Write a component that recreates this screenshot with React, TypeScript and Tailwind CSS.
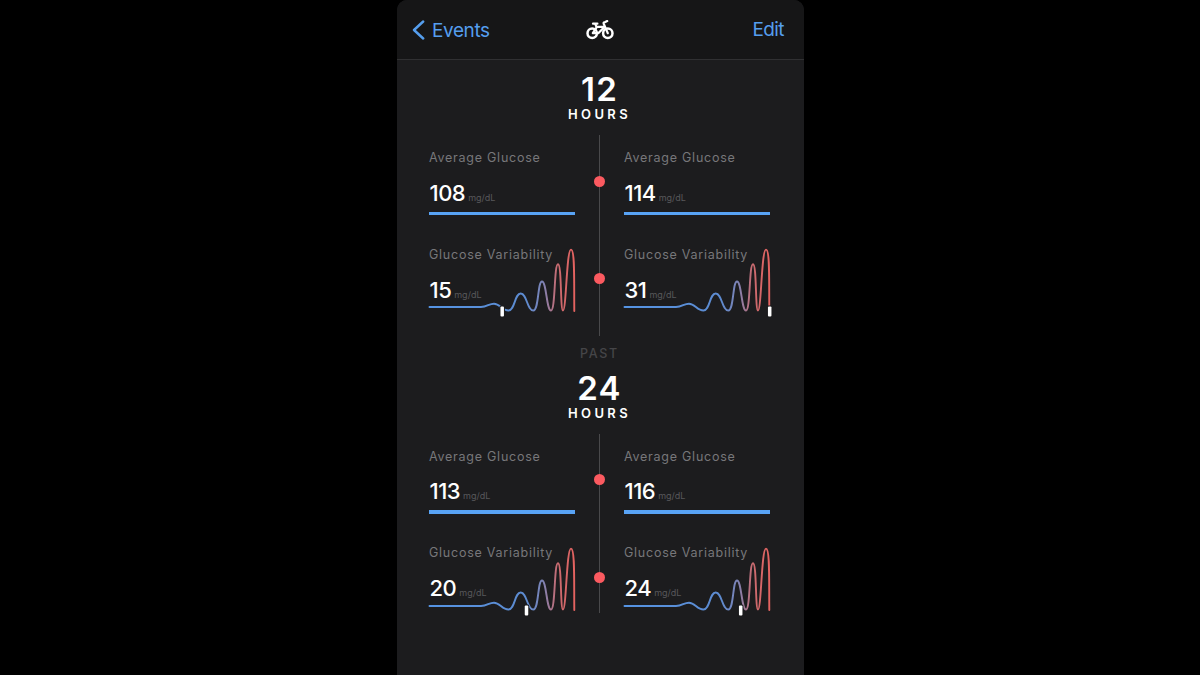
type Reading = {
  average: number;
  variability: number;
  marker: number;
};

type PeriodProps = {
  hours: number;
  before: Reading;
  after: Reading;
  last?: boolean;
};

const WAVE =
  "M.5 62H52C58 62 60 58.7 65 58.7C71 58.7 73 65.5 79.5 65.5C86 65.5 85.5 48.5 91.7 48.5C98 48.5 98 65.5 104.3 65.5C110 65.5 108.5 36.5 113 36.5C117.5 36.5 117.5 65.5 122 65.5C126.5 65.5 125 19.2 129 19.2C132.8 19.2 131.2 65.5 134 65.5C137.3 65.5 137.5 4.6 142 4.6C146 4.6 145 36 145.3 66";

function BikeIcon() {
  return (
    <svg className="-translate-x-px" width="28" height="20" viewBox="0 0 28 20" fill="none" stroke="white" strokeWidth="2.2" strokeLinecap="round" strokeLinejoin="round">
      <circle cx="6.2" cy="13.2" r="4.7" strokeWidth="2.5" />
      <circle cx="21.8" cy="13.2" r="4.7" strokeWidth="2.5" />
      <path d="M7 3.7h4.4" />
      <path d="M9.4 4.2L10.6 7.4L6.8 13.2H12.3L18.6 6.9H10.4" />
      <path d="M21.8 13.2L17.8 4C17.2 2.4 18 2.1 19.2 2.1l2-1" />
    </svg>
  );
}

function Value({ value }: { value: number }) {
  return (
    <div className="flex h-6 items-baseline gap-[3px] pl-[0.5px] leading-6">
      <span className="text-[22px] font-medium tracking-[-0.5px] text-white">{value}</span>
      <span className="text-[9px] tracking-[0] text-[#58585b]">mg/dL</span>
    </div>
  );
}

function Label({ text }: { text: string }) {
  return <div className="h-[17px] whitespace-nowrap text-[12.5px] leading-[17px] tracking-[0.75px] text-[#77777a]">{text}</div>;
}

function Stats({ id, reading }: { id: string; reading: Reading }) {
  return (
    <div className="w-[146px] pt-3.5">
      <Label text="Average Glucose" />
      <div className="mt-[14.5px]">
        <Value value={reading.average} />
      </div>
      <div className="mt-[7px] h-[3.5px] bg-[#58a3f5]" />
      <div className="relative mt-[30.5px]">
        <Label text="Glucose Variability" />
        <div className="mt-[15px]">
          <Value value={reading.variability} />
        </div>
        {/* The wave climbs past the label, so it is laid over the text */}
        <svg className="absolute left-0 -top-[0.5px] overflow-visible" width="146" height="74" viewBox="0 0 146 74" fill="none">
          <defs>
            <linearGradient id={id} gradientUnits="userSpaceOnUse" x1="0" y1="0" x2="146" y2="0">
              <stop offset="0" stopColor="#5594e4" />
              <stop offset="0.66" stopColor="#5d8bd0" />
              <stop offset="0.78" stopColor="#7d83b5" />
              <stop offset="0.88" stopColor="#c96b70" />
              <stop offset="1" stopColor="#e5625f" />
            </linearGradient>
          </defs>
          <path d={WAVE} stroke={`url(#${id})`} strokeWidth="1.9" strokeLinecap="round" />
          <rect x={reading.marker - 2.75} y="60.5" width="5.5" height="12" rx="1.5" fill="#1c1c1e" />
          <rect x={reading.marker - 1.75} y="61.5" width="3.5" height="10" rx="1" fill="white" />
        </svg>
      </div>
    </div>
  );
}

function Period({ hours, before, after, last }: PeriodProps) {
  return (
    <section>
      <div className="flex h-[75px] flex-col items-center pt-[13px] text-white">
        <div className="h-8 -translate-x-px text-[33px] font-semibold leading-8 tracking-[1.3px]">{hours}</div>
        <div className="mt-[1px] h-4 -translate-x-px text-[13px] font-semibold leading-4 tracking-[3.4px]">HOURS</div>
      </div>
      <div className={`flex px-8 ${last ? "h-[179px]" : "h-[201px]"}`}>
        <Stats id={`wave-before-${hours}`} reading={before} />
        <div className="relative flex w-[49px] justify-center">
          <div className="w-px bg-[#49494b]" />
          <div className="absolute left-[19px] top-[40.5px] size-[11px] rounded-full bg-[#fb5a60]" />
          <div className="absolute left-[19px] top-[138px] size-[11px] rounded-full bg-[#fb5a60]" />
        </div>
        <Stats id={`wave-after-${hours}`} reading={after} />
      </div>
    </section>
  );
}

export default function App() {
  return (
    <div className="flex h-[675px] w-[1200px] overflow-hidden bg-black pl-[397px] font-['Inter',sans-serif]">
      <main className="h-full w-[407px] overflow-hidden rounded-t-[10px] bg-[#1c1c1e]">
        <header className="flex h-[60px] items-center justify-between border-b border-[#303032] bg-[#161617] pl-[15px] pr-5 text-[19px] text-[#559eee]">
          <div className="flex w-24 items-center gap-[7px]">
            <svg width="13" height="20" viewBox="0 0 13 20" fill="none" stroke="currentColor" strokeWidth="2.4" strokeLinecap="round" strokeLinejoin="round">
              <path d="M11.2 1.5L2 10l9.2 8.5" />
            </svg>
            <span className="translate-y-[1.5px] tracking-[-0.4px]">Events</span>
          </div>
          <BikeIcon />
          <div className="w-[91px] translate-y-px text-right tracking-[-0.6px]">Edit</div>
        </header>
        <Period
          hours={12}
          before={{ average: 108, variability: 15, marker: 73.2 }}
          after={{ average: 114, variability: 31, marker: 145.7 }}
        />
        <div className="h-[22.5px] -translate-x-px pt-[9px] text-center text-[12.5px] font-medium leading-[17px] tracking-[1.7px] text-[#454548]">PAST</div>
        <Period
          hours={24}
          before={{ average: 113, variability: 20, marker: 97.5 }}
          after={{ average: 116, variability: 24, marker: 116.7 }}
          last
        />
      </main>
    </div>
  );
}
